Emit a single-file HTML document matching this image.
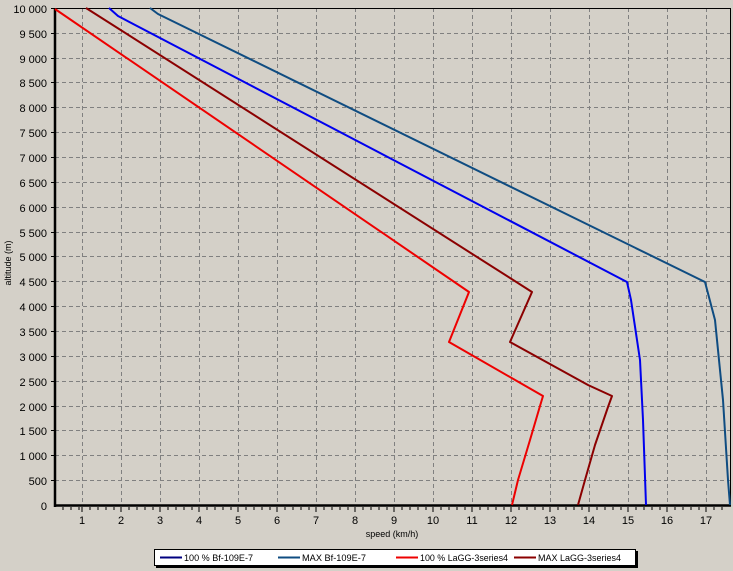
<!DOCTYPE html>
<html><head><style>
body{margin:0;background:#d4d0c8;width:733px;height:571px;overflow:hidden;font-family:"Liberation Sans",sans-serif}
svg{display:block}
</style></head><body>
<svg width="733" height="571" xmlns="http://www.w3.org/2000/svg" font-family="Liberation Sans, sans-serif">
<rect width="733" height="571" fill="#d4d0c8"/>
<g stroke="#808080" stroke-dasharray="4,3" stroke-width="1">
<line x1="82.5" y1="8" x2="82.5" y2="505"/><line x1="121.5" y1="8" x2="121.5" y2="505"/><line x1="160.5" y1="8" x2="160.5" y2="505"/><line x1="199.5" y1="8" x2="199.5" y2="505"/><line x1="238.5" y1="8" x2="238.5" y2="505"/><line x1="277.5" y1="8" x2="277.5" y2="505"/><line x1="316.5" y1="8" x2="316.5" y2="505"/><line x1="355.5" y1="8" x2="355.5" y2="505"/><line x1="394.5" y1="8" x2="394.5" y2="505"/><line x1="433.5" y1="8" x2="433.5" y2="505"/><line x1="472.5" y1="8" x2="472.5" y2="505"/><line x1="511.5" y1="8" x2="511.5" y2="505"/><line x1="550.5" y1="8" x2="550.5" y2="505"/><line x1="589.5" y1="8" x2="589.5" y2="505"/><line x1="628.5" y1="8" x2="628.5" y2="505"/><line x1="667.5" y1="8" x2="667.5" y2="505"/><line x1="706.5" y1="8" x2="706.5" y2="505"/>
<line x1="55" y1="33.5" x2="730" y2="33.5"/><line x1="55" y1="58.5" x2="730" y2="58.5"/><line x1="55" y1="82.5" x2="730" y2="82.5"/><line x1="55" y1="107.5" x2="730" y2="107.5"/><line x1="55" y1="132.5" x2="730" y2="132.5"/><line x1="55" y1="157.5" x2="730" y2="157.5"/><line x1="55" y1="182.5" x2="730" y2="182.5"/><line x1="55" y1="207.5" x2="730" y2="207.5"/><line x1="55" y1="232.5" x2="730" y2="232.5"/><line x1="55" y1="256.5" x2="730" y2="256.5"/><line x1="55" y1="281.5" x2="730" y2="281.5"/><line x1="55" y1="306.5" x2="730" y2="306.5"/><line x1="55" y1="331.5" x2="730" y2="331.5"/><line x1="55" y1="356.5" x2="730" y2="356.5"/><line x1="55" y1="381.5" x2="730" y2="381.5"/><line x1="55" y1="406.5" x2="730" y2="406.5"/><line x1="55" y1="430.5" x2="730" y2="430.5"/><line x1="55" y1="455.5" x2="730" y2="455.5"/><line x1="55" y1="480.5" x2="730" y2="480.5"/>
</g>
<line x1="55" y1="8.5" x2="731" y2="8.5" stroke="#000"/>
<line x1="730.5" y1="8" x2="730.5" y2="506" stroke="#000"/>
<line x1="55" y1="8" x2="55" y2="507" stroke="#000" stroke-width="2.5"/>
<line x1="54" y1="505.5" x2="731" y2="505.5" stroke="#000" stroke-width="2.5"/>
<g stroke="#000">
<path d="M63 507v3M71 507v3M79 507v3M82 507v5M90 507v3M98 507v3M106 507v3M114 507v3M121 507v5M129 507v3M137 507v3M145 507v3M153 507v3M160 507v5M168 507v3M176 507v3M184 507v3M192 507v3M199 507v5M207 507v3M215 507v3M223 507v3M231 507v3M238 507v5M246 507v3M254 507v3M262 507v3M270 507v3M277 507v5M285 507v3M293 507v3M301 507v3M309 507v3M316 507v5M324 507v3M332 507v3M340 507v3M348 507v3M355 507v5M363 507v3M371 507v3M379 507v3M387 507v3M394 507v5M402 507v3M410 507v3M418 507v3M426 507v3M433 507v5M441 507v3M449 507v3M457 507v3M465 507v3M472 507v5M480 507v3M488 507v3M496 507v3M504 507v3M511 507v5M519 507v3M527 507v3M535 507v3M543 507v3M550 507v5M558 507v3M566 507v3M574 507v3M582 507v3M589 507v5M597 507v3M605 507v3M613 507v3M621 507v3M628 507v5M636 507v3M644 507v3M652 507v3M660 507v3M667 507v5M675 507v3M683 507v3M691 507v3M699 507v3M706 507v5M714 507v3M722 507v3"/>
<path d="M51 8.5h3M51 33.5h3M51 58.5h3M51 82.5h3M51 107.5h3M51 132.5h3M51 157.5h3M51 182.5h3M51 207.5h3M51 232.5h3M51 256.5h3M51 281.5h3M51 306.5h3M51 331.5h3M51 356.5h3M51 381.5h3M51 406.5h3M51 430.5h3M51 455.5h3M51 480.5h3"/>
</g>
<g fill="none" stroke-width="2" stroke-linejoin="round">
<polyline stroke="#0f4c81" points="150,8 158,14 705,282 715,320 723,400 728,480 730,505"/>
<polyline stroke="#0000ee" points="109,8 118,16 627,282 631,300 640,360 643,420 646,505"/>
<polyline stroke="#8b0000" points="86,8 532,292 510,342 588,385 612,396 608,407 595,445 585,480 578,505"/>
<polyline stroke="#ee0000" points="55,9 469,292 449,342 543,396 540,406 530,440 518,480 512,505"/>
</g>
<g font-size="11" text-anchor="end" fill="#000">
<text x="47" y="13">10 000</text><text x="47" y="38">9 500</text><text x="47" y="63">9 000</text><text x="47" y="87">8 500</text><text x="47" y="112">8 000</text><text x="47" y="137">7 500</text><text x="47" y="162">7 000</text><text x="47" y="187">6 500</text><text x="47" y="212">6 000</text><text x="47" y="237">5 500</text><text x="47" y="261">5 000</text><text x="47" y="286">4 500</text><text x="47" y="311">4 000</text><text x="47" y="336">3 500</text><text x="47" y="361">3 000</text><text x="47" y="386">2 500</text><text x="47" y="411">2 000</text><text x="47" y="435">1 500</text><text x="47" y="460">1 000</text><text x="47" y="485">500</text><text x="47" y="510">0</text>
</g>
<g font-size="11" text-anchor="middle" fill="#000">
<text x="82" y="524">1</text><text x="121" y="524">2</text><text x="160" y="524">3</text><text x="199" y="524">4</text><text x="238" y="524">5</text><text x="277" y="524">6</text><text x="316" y="524">7</text><text x="355" y="524">8</text><text x="394" y="524">9</text><text x="433" y="524">10</text><text x="472" y="524">11</text><text x="511" y="524">12</text><text x="550" y="524">13</text><text x="589" y="524">14</text><text x="628" y="524">15</text><text x="667" y="524">16</text><text x="706" y="524">17</text>
</g>
<text x="392" y="537" font-size="9" text-anchor="middle">speed (km/h)</text>
<text transform="translate(11,263) rotate(-90)" font-size="9" text-anchor="middle">altitude (m)</text>
<rect x="156" y="551" width="482" height="17" fill="#000"/>
<rect x="154.5" y="549.5" width="481" height="16" fill="#fff" stroke="#000"/>
<g stroke-width="2">
<line x1="160" y1="557.5" x2="182" y2="557.5" stroke="#000080"/>
<line x1="278" y1="557.5" x2="300" y2="557.5" stroke="#0f4c81"/>
<line x1="396" y1="557.5" x2="418" y2="557.5" stroke="#ee0000"/>
<line x1="514" y1="557.5" x2="536" y2="557.5" stroke="#8b0000"/>
</g>
<g font-size="9" fill="#000">
<text x="184" y="561" textLength="69" lengthAdjust="spacingAndGlyphs">100 % Bf-109E-7</text>
<text x="302" y="561" textLength="64" lengthAdjust="spacingAndGlyphs">MAX Bf-109E-7</text>
<text x="420" y="561" textLength="88" lengthAdjust="spacingAndGlyphs">100 % LaGG-3series4</text>
<text x="538" y="561" textLength="83" lengthAdjust="spacingAndGlyphs">MAX LaGG-3series4</text>
</g>
</svg>
</body></html>
